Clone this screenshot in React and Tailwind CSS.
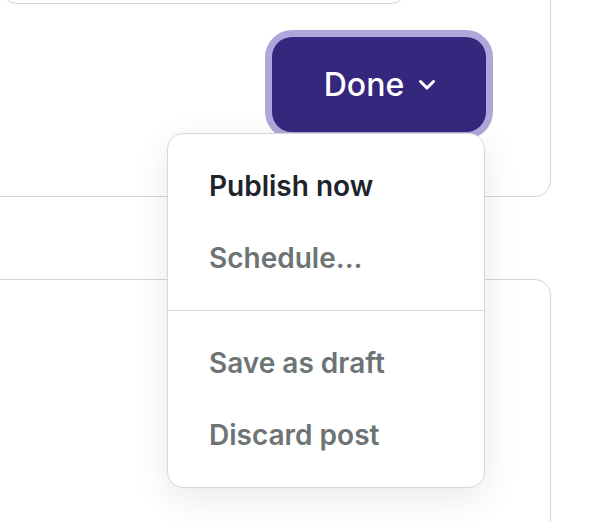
import React from 'react';

const items = [
  [{ label: 'Publish now', strong: true }, { label: 'Schedule...' }],
  [{ label: 'Save as draft' }, { label: 'Discard post' }],
];

const Chevron = () => (
  <svg width="18" height="12" viewBox="0 0 18 12" fill="none" className="shrink-0">
    <path d="M2.5 2.5l6.5 6.5 6.5-6.5" stroke="white" strokeWidth="3" strokeLinecap="round" strokeLinejoin="round" />
  </svg>
);

export default function App() {
  return (
    <div className="relative w-[610px] h-[522px] overflow-hidden bg-white font-['Inter',sans-serif]">
      {/* composer card */}
      <div className="ml-[-20px] mt-[-60px] w-[571px] h-[257px] border border-[#d5d7d9] rounded-2xl pl-5 pr-[64px] flex flex-col">
        <div className="w-[406px] h-[63px] shrink-0 border border-[#d5d7d9] rounded-2xl" />
        <div className="flex justify-end mt-[33px]">
          <button className="w-[214px] h-[95px] rounded-[20px] bg-[#36277e] shadow-[0_0_0_7px_#b0a6d9] text-white text-[32px] font-medium flex items-center justify-center gap-[14px] pl-[2px]">
            Done
            <Chevron />
          </button>
        </div>
      </div>

      {/* next card */}
      <div className="ml-[-20px] mt-[82px] w-[571px] h-[300px] border border-[#d5d7d9] rounded-2xl" />

      {/* dropdown menu */}
      <div className="absolute left-[167px] top-[133px] w-[318px] bg-white border border-[#d6d8da] rounded-2xl shadow-[0_10px_36px_rgba(0,0,0,0.09)]">
        {items.map((group, gi) => (
          <div key={gi} className={gi > 0 ? 'border-t border-[#d6d8da] py-4' : 'py-4'}>
            {group.map((it) => (
              <div
                key={it.label}
                className={`h-[72px] flex items-center pl-[41px] text-[28px] font-semibold ${it.strong ? 'text-[#1d242b]' : 'text-[#6d7475]'}`}
              >
                {it.label}
              </div>
            ))}
          </div>
        ))}
      </div>
    </div>
  );
}
